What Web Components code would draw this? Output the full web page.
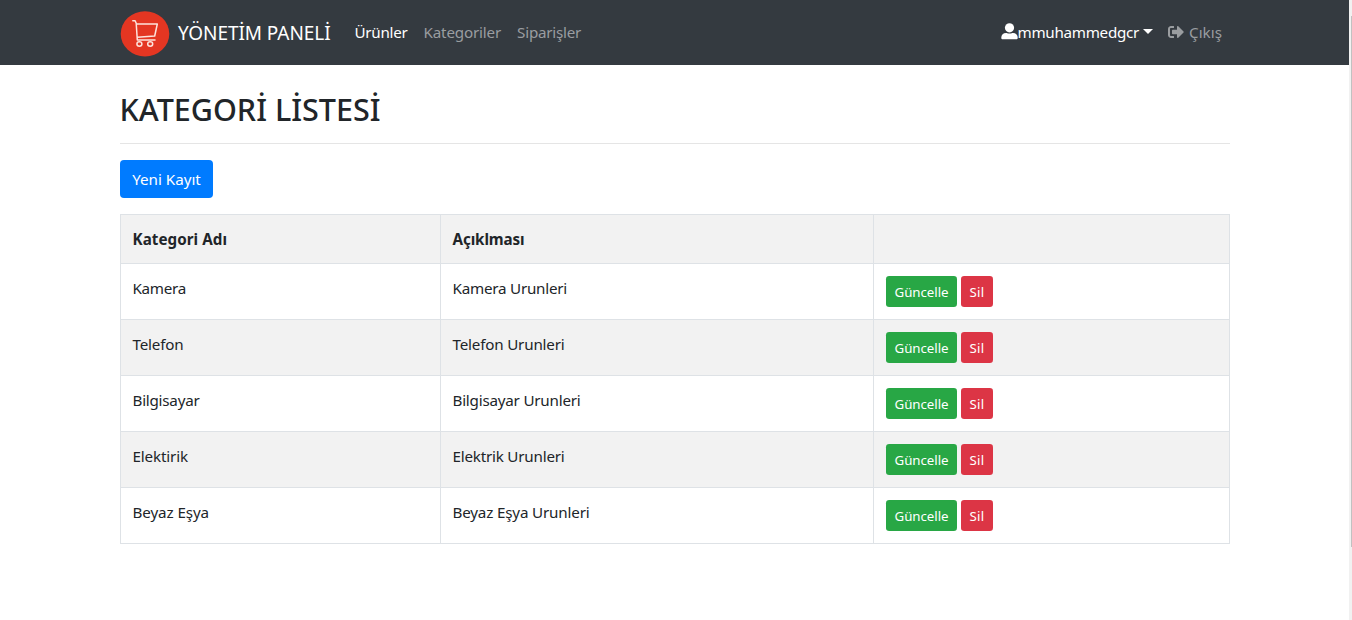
<!DOCTYPE html>
<html lang="tr">
<head>
<meta charset="utf-8">
<title>Yönetim Paneli</title>
<style>
html,body{margin:0;height:100%;overflow:hidden;background:#fff}
body{font-family:"Noto Sans","Open Sans",sans-serif;font-size:15.2px;line-height:24px;color:#212529}
</style>
</head>
<body>
<admin-page></admin-page>
<script>
const define = (name, html, setup) => {
  const tpl = document.createElement('template');
  tpl.innerHTML = html;
  customElements.define(name, class extends HTMLElement {
    connectedCallback() {
      if (this.shadowRoot) return;
      this.attachShadow({mode: 'open'}).append(tpl.content.cloneNode(true));
      if (setup) setup(this, this.shadowRoot);
    }
  });
};

// Inline label whose tracking is adjusted to a given width
define('fit-label', `<style>:host{display:inline-block;white-space:nowrap}span{display:inline-block}</style><span><slot></slot></span>`,
  (el, root) => {
    const w = +el.getAttribute('w');
    const span = root.querySelector('span');
    const natural = span.getBoundingClientRect().width;
    span.style.letterSpacing = ((w - natural) / el.textContent.length) + 'px';
    el.style.width = w + 'px';
  });

define('cart-logo', `<style>:host{display:block;width:50px;height:46px}svg{display:block}</style>
<svg width="50" height="46" viewBox="0 0 50 46"><ellipse cx="25" cy="22.8" rx="24.3" ry="22.6" fill="#e43622"/>
<g fill="none" stroke="#fde3dc" stroke-width="1.5" stroke-linecap="round" stroke-linejoin="round"><path d="M12.8 9.7h2.300l1.100 2.500 1.100 16.800h17.700M16.400 13h20.900l-2.600 12-17.400 1.200"/><ellipse cx="19.400" cy="33" rx="2.500" ry="2.200"/><ellipse cx="30.200" cy="33" rx="2.500" ry="2.200"/></g></svg>`);

define('user-icon', `<style>:host{display:block;width:17px;height:17px}svg{display:block}</style>
<svg width="17" height="17" viewBox="0 0 17 17" fill="#fff"><circle cx="8.5" cy="4.8" r="4.6"/><path d="M5 9.9h.6a7 7 0 0 0 5.8 0h.6c2.700 0 4.700 2 4.700 4.500v.6c0 .8-.6 1.300-1.400 1.300H1.700C.9 16.300.3 15.800.3 15v-.6c0-2.500 2-4.500 4.700-4.500z"/></svg>`);

define('exit-icon', `<style>:host{display:block;width:16px;height:16px}svg{display:block}</style>
<svg width="16" height="16" viewBox="0 0 512 512" fill="currentColor"><path d="M497 273 329 441c-15 15-41 4.500-41-17v-96H152c-13.300 0-24-10.700-24-24v-96c0-13.300 10.700-24 24-24h136V88c0-21.400 25.900-32 41-17l168 168c9.300 9.400 9.300 24.600 0 34zM192 436v-40c0-6.600-5.400-12-12-12H96c-17.700 0-32-14.300-32-32V160c0-17.700 14.300-32 32-32h84c6.600 0 12-5.400 12-12V76c0-6.600-5.400-12-12-12H96c-53 0-96 43-96 96v192c0 53 43 96 96 96h84c6.600 0 12-5.400 12-12z"/></svg>`);

define('nav-link', `<style>:host{display:flex;align-items:center;padding:7px 8px 9px;color:#9a9da0}:host([active]){color:#fff}</style><slot></slot>`);

define('top-nav', `<style>
:host{display:flex;box-sizing:border-box;height:65px;padding:0 119px 0 120px;background:#343a40;align-items:center}
.brand{display:flex;align-items:center;gap:8px;color:#fff;font-size:19px;margin-right:16px;padding-top:2px}
.brand fit-label{margin-top:-2px}
nav{display:flex;flex:1}
.right{display:flex}
.caret{border:solid transparent;border-width:5px 5px 0;border-top-color:#fff;margin:-1px -1px 0 4px}
exit-icon{margin-right:5px}user-icon{margin-top:0}
</style>
<div class="brand"><cart-logo></cart-logo><fit-label w="152.5">YÖNETİM PANELİ</fit-label></div>
<nav><nav-link active><fit-label w="53">Ürünler</fit-label></nav-link><nav-link><fit-label w="77.6">Kategoriler</fit-label></nav-link><nav-link><fit-label w="64">Siparişler</fit-label></nav-link></nav>
<div class="right"><nav-link active><user-icon></user-icon><fit-label w="121.5">mmuhammedgcr</fit-label><span class="caret"></span></nav-link><nav-link><exit-icon></exit-icon><fit-label w="33">Çıkış</fit-label></nav-link></div>`);

define('action-button', `<style>
:host{display:inline-flex;box-sizing:border-box;align-items:center;justify-content:center;color:#fff;width:93px;height:38px;border-radius:4px;background:#007bff}
:host([kind=update]),:host([kind=delete]){height:31px;padding-top:1px;border-radius:3.2px;font-size:13.3px;line-height:21px}
:host([kind=update]){width:71px;background:#28a745}
:host([kind=delete]){width:32px;background:#dc3545}
</style><slot></slot>`);

define('category-table', `<style>
:host{display:block}
table{border-collapse:collapse;table-layout:fixed;width:1110px}
th,td{border:1px solid #dee2e6;padding:12px 12px 12px 11.5px;text-align:left;vertical-align:top;box-sizing:border-box}
th{height:49px;font-weight:700}td{height:56px}
tr:nth-child(odd){background:#f2f2f2}
fit-label{display:block}
.actions{display:flex;gap:4px;padding-left:.5px}
</style><table><colgroup><col style="width:320px"><col style="width:433px"><col></colgroup><tbody>
<tr><th><fit-label w="94.5">Kategori Adı</fit-label></th><th><fit-label w="72">Açıklması</fit-label></th><th></th></tr>
</tbody></table>`,
  (el, root) => {
    const body = root.querySelector('tbody');
    [['Kamera', 53.5, 'Kamera Urunleri', 114.5], ['Telefon', 51, 'Telefon Urunleri', 112],
     ['Bilgisayar', 67, 'Bilgisayar Urunleri', 128], ['Elektirik', 55.5, 'Elektrik Urunleri', 112],
     ['Beyaz Eşya', 76.5, 'Beyaz Eşya Urunleri', 137]].forEach(([name, nw, desc, dw]) => {
      body.insertAdjacentHTML('beforeend', `<tr><td><fit-label w="${nw}">${name}</fit-label></td><td><fit-label w="${dw}">${desc}</fit-label></td><td><div class="actions"><action-button kind="update"><fit-label w="54">Güncelle</fit-label></action-button><action-button kind="delete"><fit-label w="15">Sil</fit-label></action-button></div></td></tr>`);
    });
  });

define('scroll-track', `<style>:host{display:block;box-sizing:border-box;width:3px;background:#f1f1f1;padding:16px 0 0 2px}div{height:531px;background:#c1c1c1}</style><div></div>`);

define('admin-page', `<style>
:host{display:flex;height:620px}
.view{flex:1}
main{width:1110px;margin-left:120px;padding-top:25px}
h2{margin:0 0 0 -.5px;font-size:30.5px;line-height:38px;font-weight:500;height:38px}
hr{border:0;border-top:1px solid #e5e5e5;margin:15px 0 16px}
.new{display:flex;margin-bottom:16px}
</style>
<div class="view"><top-nav></top-nav>
<main><h2><fit-label w="261">KATEGORİ LİSTESİ</fit-label></h2><hr>
<div class="new"><action-button><fit-label w="68.5">Yeni Kayıt</fit-label></action-button></div>
<category-table></category-table></main></div>
<scroll-track></scroll-track>`);
</script>
</body>
</html>
